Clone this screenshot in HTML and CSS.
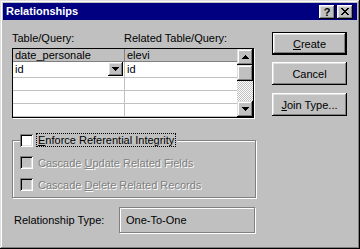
FILE: index.html
```html
<!DOCTYPE html>
<html>
<head>
    <meta charset="utf-8">
    <title>Relationships</title>
    <link rel="stylesheet" href="styles.css">
</head>
<body>
<div class="window">
    <div class="titlebar">
        <span class="title">Relationships</span>
        <span class="tbtn">?</span>
        <span class="tbtn close">
            <svg width="8" height="7" viewBox="0 0 8 7"><path d="M0 0h2v1H0zM6 0h2v1H6zM1 1h2v1H1zM5 1h2v1H5zM2 2h4v1H2zM3 3h2v1H3zM2 4h4v1H2zM1 5h2v1H1zM5 5h2v1H5zM0 6h2v1H0zM6 6h2v1H6z"/></svg>
        </span>
    </div>

    <div class="body">
        <div class="main">
            <div class="labels">
                <span class="col1">Table/Query:</span>
                <span>Related Table/Query:</span>
            </div>

            <div class="grid">
                <div class="cells">
                    <div class="row head"><div class="cell">date_personale</div><div class="cell">elevi</div></div>
                    <div class="row first">
                        <div class="cell">id
                            <span class="drop"><svg width="7" height="4" viewBox="0 0 7 4"><path d="M0 0h7v1H6v1H5v1H4v1H3V3H2V2H1V1H0z"/></svg></span>
                        </div>
                        <div class="cell">id</div>
                    </div>
                    <div class="row"><div class="cell"></div><div class="cell"></div></div>
                    <div class="row"><div class="cell"></div><div class="cell"></div></div>
                    <div class="row"><div class="cell"></div><div class="cell"></div></div>
                </div>
                <div class="vscroll">
                    <span class="sbtn"><svg width="7" height="4" viewBox="0 0 7 4"><path d="M3 0h1v1h1v1h1v1h1v1H0V3h1V2h1V1h1z"/></svg></span>
                    <span class="sbtn"></span>
                    <span class="track"></span>
                    <span class="sbtn"><svg width="7" height="4" viewBox="0 0 7 4"><path d="M0 0h7v1H6v1H5v1H4v1H3V3H2V2H1V1H0z"/></svg></span>
                </div>
            </div>

            <fieldset class="group">
                <legend><span class="check"></span><span class="focus"><u>E</u>nforce Referential Integrity</span></legend>
                <div class="opt disabled"><span class="check"></span><span class="label">Cascade <u>U</u>pdate Related Fields</span></div>
                <div class="opt disabled"><span class="check"></span><span class="label">Cascade <u>D</u>elete Related Records</span></div>
            </fieldset>

            <div class="type-row">
                <span class="type-label">Relationship Type:</span>
                <div class="type-field">One-To-One</div>
            </div>
        </div>

        <div class="side">
            <div class="btn default"><span><u>C</u>reate</span></div>
            <div class="btn cancel">Cancel</div>
            <div class="btn join"><span><u>J</u>oin Type...</span></div>
        </div>
    </div>
</div>
</body>
</html>
```

FILE: styles.css
```css
body {
    margin: 0;
    font: 11px "Liberation Sans", Arial, sans-serif;
    color: #000;
}

.window {
    width: 360px;
    height: 249px;
    box-sizing: border-box;
    padding: 3px;
    background: #c0c0c0;
    box-shadow: inset -1px -1px #000, inset 1px 1px #dfdfdf,
                inset -2px -2px #808080, inset 2px 2px #fff;
}

/* title bar */
.titlebar {
    display: flex;
    align-items: center;
    height: 17px;
    padding: 0 4px 0 3px;
    background: #000080;
    color: #fff;
}
.title {
    flex: 1;
    font-weight: bold;
    line-height: 17px;
}
.tbtn {
    width: 16px;
    height: 14px;
    box-sizing: border-box;
    display: flex;
    align-items: center;
    justify-content: center;
    background: #c0c0c0;
    color: #000;
    font-weight: bold;
    box-shadow: inset -1px -1px #000, inset 1px 1px #fff,
                inset -2px -2px #808080, inset 2px 2px #dfdfdf;
}
.tbtn.close {
    margin-left: 2px;
}

.body {
    display: flex;
}
.main {
    width: 245px;
    margin-left: 9px;
    padding-top: 12px;
}
.labels {
    display: flex;
    line-height: 13px;
}
.labels .col1 {
    width: 112px;
}

/* table grid */
.grid {
    display: flex;
    width: 242px;
    height: 70px;
    box-sizing: border-box;
    margin-top: 3px;
    border: 1px solid #000;
    background: #fff;
    box-shadow: 1px 1px 0 #fff;
}
.cells {
    flex: 1;
}
.row {
    display: flex;
    height: 13px;
    box-sizing: border-box;
    border-bottom: 1px solid #c0c0c0;
    line-height: 12px;
}
.row .cell {
    display: flex;
    align-items: flex-start;
    padding-left: 2px;
    box-sizing: border-box;
}
.row .cell:first-child {
    width: 112px;
    border-right: 1px solid #c0c0c0;
}
.row .cell:last-child {
    flex: 1;
}
.row.head {
    background: #c0c0c0;
    border-bottom-color: #808080;
}
.row.head .cell:first-child {
    border-right-color: #808080;
}
.row.first {
    height: 16px;
    line-height: 15px;
}
.drop {
    margin-left: auto;
    margin-right: 1px;
    width: 15px;
    height: 14px;
    display: flex;
    align-items: center;
    justify-content: center;
    background: #c0c0c0;
    box-shadow: inset -1px -1px #000, inset 1px 1px #fff,
                inset -2px -2px #808080, inset 2px 2px #dfdfdf;
}

.vscroll {
    width: 16px;
    display: flex;
    flex-direction: column;
}
.sbtn {
    height: 16px;
    display: flex;
    align-items: center;
    justify-content: center;
    background: #c0c0c0;
    box-shadow: inset -1px -1px #000, inset 1px 1px #dfdfdf,
                inset -2px -2px #808080, inset 2px 2px #fff;
}
.track {
    flex: 1;
    background: repeating-conic-gradient(#fff 0 25%, #c0c0c0 0 50%) 0 0 / 2px 2px;
}

/* referential integrity group */
.group {
    width: 244px;
    box-sizing: border-box;
    margin: 15px 0 0;
    padding: 9px 0 6px 7px;
    border: 1px solid #808080;
    box-shadow: inset 1px 1px #fff, 1px 1px #fff;
}
.group legend {
    display: flex;
    align-items: center;
    gap: 3px;
    height: 14px;
    padding: 0 1px 0 0;
    background: #c0c0c0;
}
.check {
    flex: none;
    width: 13px;
    height: 13px;
    box-sizing: border-box;
    background: #fff;
    box-shadow: inset 1px 1px #808080, inset -1px -1px #fff,
                inset 2px 2px #000, inset -2px -2px #dfdfdf;
}
.focus {
    border: 1px dotted #000;
    padding: 0 1px;
    line-height: 12px;
}
.opt {
    display: flex;
    align-items: center;
    gap: 5px;
    height: 13px;
}
.opt + .opt {
    margin-top: 9px;
}
.opt.disabled .check {
    background: #c0c0c0;
}
.opt.disabled .label {
    color: #808080;
    text-shadow: 1px 1px 0 #fff;
}

.type-row {
    display: flex;
    align-items: center;
    margin-top: 9px;
}
.type-label {
    width: 105px;
    padding-left: 2px;
}
.type-field {
    width: 136px;
    height: 26px;
    box-sizing: border-box;
    display: flex;
    align-items: center;
    padding-left: 6px;
    border: 1px solid #808080;
    box-shadow: inset 1px 1px #fff, 1px 1px #fff;
}

/* command buttons */
.side {
    display: flex;
    flex-direction: column;
    margin-left: 15px;
    padding-top: 12px;
}
.btn {
    width: 75px;
    height: 23px;
    box-sizing: border-box;
    display: flex;
    align-items: center;
    justify-content: center;
    background: #c0c0c0;
    box-shadow: inset -1px -1px #000, inset 1px 1px #fff,
                inset -2px -2px #808080, inset 2px 2px #dfdfdf;
}
.btn.default {
    border: 1px solid #000;
}
.btn.cancel {
    margin-top: 7px;
}
.btn.join {
    margin-top: 8px;
}
```
